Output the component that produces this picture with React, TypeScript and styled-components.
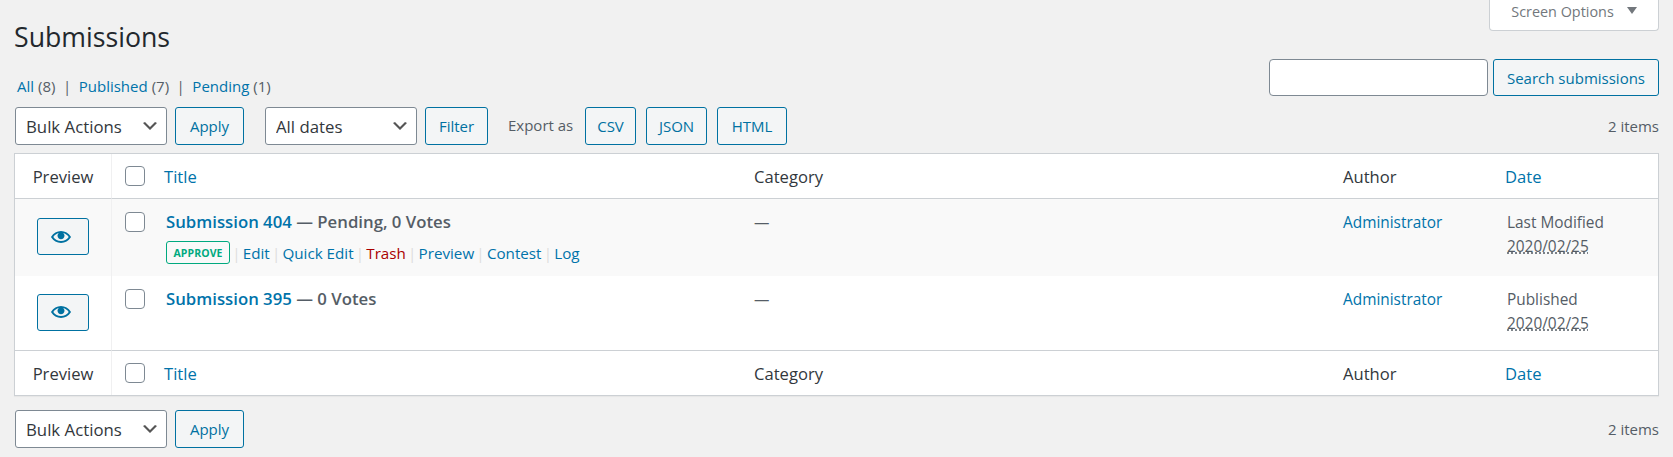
import React from "react";
import styled, { createGlobalStyle } from "styled-components";

const Global = createGlobalStyle`
  html, body { margin: 0; padding: 0; background: #f1f1f1; }
  body { font-family: "Open Sans", "Noto Sans", "Liberation Sans", sans-serif; font-size: 15px; color: #32373c; }
  * { box-sizing: border-box; }
`;
const Wrap = styled.div`
  padding: 0 14px;
  height: 457px;
  overflow: hidden;
`;
const Header = styled.div`
  display: flex;
  justify-content: space-between;
  align-items: flex-start;
  height: 59px;
`;
const Title = styled.h1`
  margin: 0;
  padding-top: 19px;
  font-size: 26.7px;
  line-height: 36px;
  font-weight: 400;
  color: #23282d;
`;
const ScreenTab = styled.div`
  width: 170px;
  height: 31px;
  background: #fff;
  border: 1px solid #ccd0d4;
  border-top: none;
  border-radius: 0 0 4px 4px;
  display: flex;
  align-items: center;
  justify-content: center;
  gap: 13px;
  color: #72777c;
  font-size: 14.4px;
  padding-bottom: 7px;
`;
const Caret = styled.span`
  width: 0;
  height: 0;
  border: 5px solid transparent;
  border-top: 7px solid #72777c;
  border-bottom: none;
  margin-top: -3px;
`;
const SubRow = styled.div`
  display: flex;
  justify-content: space-between;
  align-items: flex-start;
  height: 48px;
`;
const Views = styled.div`
  display: flex;
  padding: 17px 0 0 3px;
  line-height: 20px;
  font-size: 15px;
  color: #555d66;
`;
const Link = styled.a<{ $danger?: boolean }>`
  color: ${(p) => (p.$danger ? "#a00" : "#0073aa")};
  text-decoration: none;
`;
const Count = styled.span`
  margin-left: 4px;
`;
const ViewSep = styled.span`
  margin: 0 7.5px;
`;
const SearchBox = styled.div`
  display: flex;
  gap: 5px;
`;
const SearchInput = styled.input`
  width: 219px;
  height: 37px;
  border: 1px solid #7e8993;
  border-radius: 4px;
  background: #fff;
`;
const Button = styled.button<{ $w: number; $h?: number }>`
  width: ${(p) => p.$w}px;
  height: ${(p) => p.$h ?? 38}px;
  padding: 0;
  border: 1px solid #0071a1;
  border-radius: 3px;
  background: #f3f5f6;
  color: #0071a1;
  font-family: inherit;
  font-size: 15px;
  flex: none;
`;
const Toolbar = styled.div`
  display: flex;
  align-items: center;
  padding-left: 1px;
  height: 38px;
`;
const Select = styled.select<{ $w: number }>`
  appearance: none;
  width: ${(p) => p.$w}px;
  height: 38px;
  margin-right: 8px;
  padding: 0 24px 0 10px;
  border: 1px solid #7e8993;
  border-radius: 3px;
  font-family: inherit;
  font-size: 16.8px;
  color: #32373c;
  background: #fff url("data:image/svg+xml;charset=US-ASCII,%3Csvg%20width%3D%2220%22%20height%3D%2220%22%20xmlns%3D%22http%3A%2F%2Fwww.w3.org%2F2000%2Fsvg%22%3E%3Cpath%20d%3D%22M5%206l5%205%205-5%202%201-7%207-7-7%202-1z%22%20fill%3D%22%23555%22%2F%3E%3C%2Fsvg%3E") no-repeat right 6px center / 20px 20px;
`;
const Spacer = styled.span<{ $w: number }>`
  width: ${(p) => p.$w}px;
  flex: none;
`;
const ExportLabel = styled.span`
  color: #555d66;
  font-size: 15px;
  width: 77px;
  flex: none;
  margin-top: -3px;
`;
const ExportGroup = styled.div`
  display: flex;
  gap: 10px;
`;
const Items = styled.span`
  margin-left: auto;
  color: #555d66;
  font-size: 15px;
`;
const Table = styled.table`
  margin-top: 8px;
  width: 1645px;
  table-layout: fixed;
  border-collapse: separate;
  border-spacing: 0;
  background: #fff;
  border: 1px solid #ccd0d4;
  box-shadow: 0 1px 1px rgba(0, 0, 0, 0.04);
`;
const Th = styled.th<{ $bottom?: boolean; $top?: boolean; $sep?: boolean; $center?: boolean; $pl?: number }>`
  height: 45px;
  padding: 0 0 0 ${(p) => p.$pl ?? 0}px;
  font-weight: 400;
  font-size: 16.6px;
  text-align: ${(p) => (p.$center ? "center" : "left")};
  color: #32373c;
  border-bottom: ${(p) => (p.$bottom ? "1px solid #ccd0d4" : "none")};
  border-top: ${(p) => (p.$top ? "1px solid #ccd0d4" : "none")};
  border-right: ${(p) => (p.$sep ? "1px solid #f0f0f1" : "none")};
`;
const Tr = styled.tr<{ $alt?: boolean }>`
  background: ${(p) => (p.$alt ? "#f9f9f9" : "#fff")};
`;
const Td = styled.td<{ $h?: number; $pl?: number }>`
  height: ${(p) => p.$h ?? 0}px;
  padding: 12px 0 0 ${(p) => p.$pl ?? 0}px;
  vertical-align: top;
  line-height: 24px;
  color: #555d66;
  font-size: 15.4px;
`;
const PreviewCell = styled.td`
  padding: 0;
  text-align: center;
  vertical-align: middle;
  border-right: 1px solid #f0f0f1;
`;
const EyeButton = styled.button`
  width: 52px;
  height: 37px;
  padding: 0 4px 0 0;
  margin: 0 0 2px 0;
  border: 1px solid #0071a1;
  border-radius: 3px;
  background: #f3f5f6;
  display: inline-flex;
  align-items: center;
  justify-content: center;
  vertical-align: middle;
`;
const Check = styled.input.attrs({ type: "checkbox" })`
  appearance: none;
  display: block;
  width: 20px;
  height: 20px;
  margin: 0;
  background: #fff;
  border: 1px solid #7e8993;
  border-radius: 4px;
`;
const CheckCell = styled.div`
  margin-top: -1px;
  padding: 2px 0 0 13px;
`;
const HeadCheck = styled(Check)`
  margin-left: 13px;
`;
const RowTitle = styled.div`
  font-weight: 600;
  font-size: 16.75px;
  line-height: 20px;
  margin-top: 1px;
  color: #555d66;
`;
const Strong = styled.a`
  color: #0073aa;
  text-decoration: none;
`;
const Actions = styled.div`
  display: flex;
  align-items: center;
  margin-top: 9px;
  height: 23px;
  font-size: 15.2px;
  color: #ddd;
`;
const Approve = styled.span`
  width: 64px;
  height: 23px;
  border: 1px solid #00a97f;
  border-radius: 3px;
  color: #00a97f;
  font-size: 10.5px;
  font-weight: 700;
  letter-spacing: 0.1px;
  display: flex;
  align-items: center;
  justify-content: center;
`;
const Sep = styled.span`
  margin: 0 2.2px;
`;
const Date = styled.div`
  margin-left: 2px;
`;
const Stamp = styled.abbr`
  text-decoration: underline dotted;
`;
const BottomBar = styled(Toolbar)`
  margin-top: 14px;
`;

const Eye = () => (
  <svg width="20" height="20" viewBox="0 0 20 20" fill="#0071a1">
    <path d="M19.7 9.4C17.7 6 14 3.9 10 3.9S2.3 6 .3 9.4L0 10l.3.6c2 3.4 5.7 5.5 9.7 5.5s7.7-2.1 9.7-5.5l.3-.6-.3-.6zM10 14.1c-3.1 0-6-1.6-7.7-4.1C3.6 8 5.7 6.6 8 6.1c-.9.6-1.5 1.6-1.5 2.7 0 1.9 1.6 3.5 3.5 3.5s3.5-1.6 3.5-3.5c0-1.1-.6-2.1-1.5-2.7 2.3.5 4.4 1.9 5.7 3.9-1.7 2.5-4.6 4.1-7.7 4.1z" />
  </svg>
);

const HeadRow = ({ foot }: { foot?: boolean }) => (
  <tr>
    <Th $center $sep $bottom={!foot} $top={foot}>Preview</Th>
    <Th $bottom={!foot} $top={foot}><HeadCheck /></Th>
    <Th $bottom={!foot} $top={foot} $pl={11}><Link>Title</Link></Th>
    <Th $bottom={!foot} $top={foot} $pl={10}>Category</Th>
    <Th $bottom={!foot} $top={foot} $pl={10}>Author</Th>
    <Th $bottom={!foot} $top={foot} $pl={10}><Link>Date</Link></Th>
  </tr>
);

const actions = ["Edit", "Quick Edit", "Trash", "Preview", "Contest", "Log"];

export default function App() {
  return (
    <Wrap>
      <Global />
      <Header>
        <Title>Submissions</Title>
        <ScreenTab>Screen Options <Caret /></ScreenTab>
      </Header>
      <SubRow>
        <Views>
          <Link>All</Link><Count>(8)</Count><ViewSep>|</ViewSep>
          <Link>Published</Link><Count>(7)</Count><ViewSep>|</ViewSep>
          <Link>Pending</Link><Count>(1)</Count>
        </Views>
        <SearchBox>
          <SearchInput />
          <Button $w={166} $h={37}>Search submissions</Button>
        </SearchBox>
      </SubRow>
      <Toolbar>
        <Select $w={152}><option>Bulk Actions</option></Select>
        <Button $w={69}>Apply</Button>
        <Spacer $w={21} />
        <Select $w={152}><option>All dates</option></Select>
        <Button $w={63}>Filter</Button>
        <Spacer $w={20} />
        <ExportLabel>Export as</ExportLabel>
        <ExportGroup>
          <Button $w={51}>CSV</Button>
          <Button $w={61}>JSON</Button>
          <Button $w={70}>HTML</Button>
        </ExportGroup>
        <Items>2 items</Items>
      </Toolbar>
      <Table>
        <colgroup>
          <col width={97} /><col width={41} /><col width={591} /><col width={589} /><col width={162} /><col width={163} />
        </colgroup>
        <thead><HeadRow /></thead>
        <tbody>
          <Tr $alt>
            <PreviewCell><EyeButton><Eye /></EyeButton></PreviewCell>
            <Td $h={77}><CheckCell><Check /></CheckCell></Td>
            <Td $h={77} $pl={13}>
              <RowTitle><Strong>Submission 404</Strong> — Pending, 0 Votes</RowTitle>
              <Actions>
                <Approve>APPROVE</Approve>
                {actions.map((a) => (
                  <React.Fragment key={a}>
                    <Sep>|</Sep>
                    <Link $danger={a === "Trash"}>{a}</Link>
                  </React.Fragment>
                ))}
              </Actions>
            </Td>
            <Td $h={77} $pl={10}>—</Td>
            <Td $h={77} $pl={10}><Link>Administrator</Link></Td>
            <Td $h={77} $pl={10}><Date>Last Modified<br /><Stamp>2020/02/25</Stamp></Date></Td>
          </Tr>
          <Tr>
            <PreviewCell><EyeButton><Eye /></EyeButton></PreviewCell>
            <Td $h={74}><CheckCell><Check /></CheckCell></Td>
            <Td $h={74} $pl={13}><RowTitle><Strong>Submission 395</Strong> — 0 Votes</RowTitle></Td>
            <Td $h={74} $pl={10}>—</Td>
            <Td $h={74} $pl={10}><Link>Administrator</Link></Td>
            <Td $h={74} $pl={10}><Date>Published<br /><Stamp>2020/02/25</Stamp></Date></Td>
          </Tr>
        </tbody>
        <tfoot><HeadRow foot /></tfoot>
      </Table>
      <BottomBar>
        <Select $w={152}><option>Bulk Actions</option></Select>
        <Button $w={69}>Apply</Button>
        <Items>2 items</Items>
      </BottomBar>
    </Wrap>
  );
}
